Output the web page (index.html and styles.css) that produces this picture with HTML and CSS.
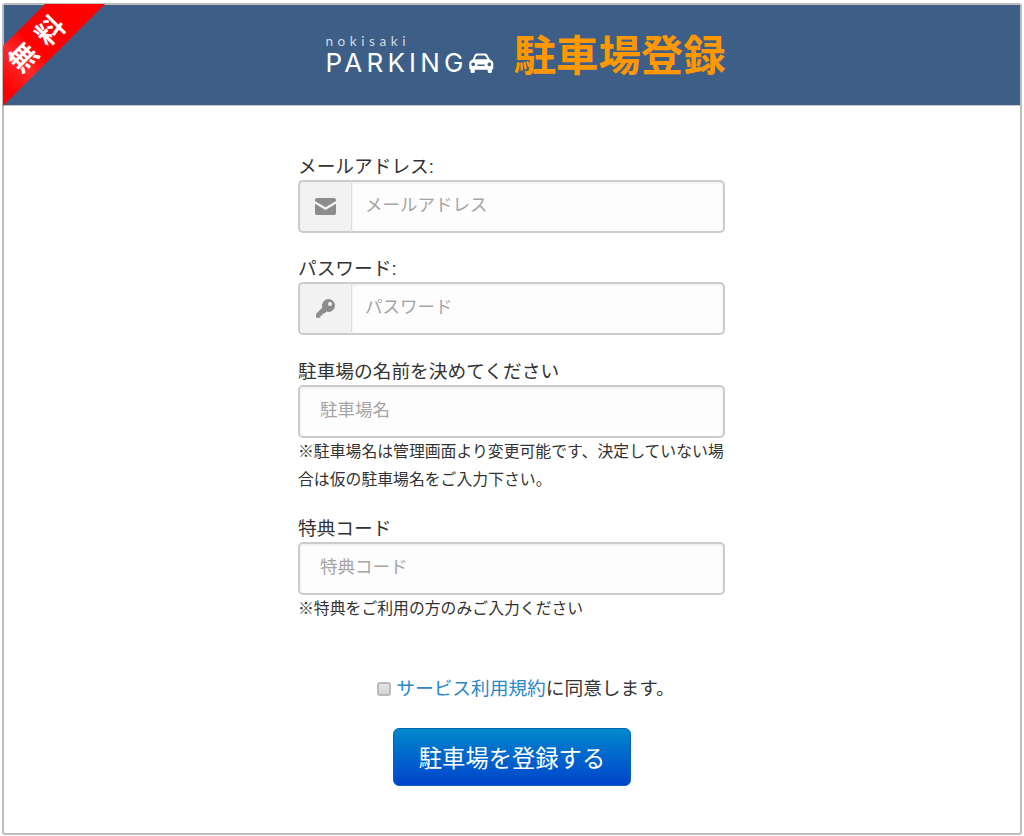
FILE: index.html
```html
<!DOCTYPE html>
<html lang="ja">
<head>
    <meta charset="UTF-8">
    <meta name="viewport" content="width=device-width, initial-scale=1.0">
    <title>駐車場登録</title>
    <link rel="stylesheet" href="styles.css">
</head>
<body>
    <div class="panel">
        <header class="panel-header">
            <div class="ribbon">
                <svg class="ribbon-band" width="102" height="102" viewBox="0 0 102 102">
                    <defs>
                        <linearGradient id="ribbon-fill" x1="0" y1="1" x2="1" y2="0">
                            <stop offset="0.1" stop-color="#ff0000"/>
                            <stop offset="0.3" stop-color="#ff2a2a"/>
                            <stop offset="0.45" stop-color="#ff0000"/>
                        </linearGradient>
                    </defs>
                    <polygon points="42,0 102,0 0,102 0,42" fill="url(#ribbon-fill)"/>
                </svg>
                <span class="ribbon-text">無料</span>
            </div>
            <div class="logo">
                <div class="logo-small">nokisaki</div>
                <div class="logo-main">
                    <span>PARKING</span>
                    <svg class="logo-car" width="26" height="21" viewBox="0 0 25 20">
                        <path fill="#fff" fill-rule="evenodd" d="M6.5 1.5C7 .8 8 .4 9 .4h7c1 0 2 .4 2.500 1.100L21 6.200c1.900.5 3.300 1.800 3.300 3.800v4.300c0 .8-.5 1.400-1.300 1.500v1.900c0 .9-.6 1.500-1.500 1.500h-1c-.9 0-1.500-.6-1.500-1.500v-1.800H6.500v1.800c0 .9-.6 1.500-1.500 1.500H4c-.9 0-1.500-.6-1.500-1.500v-1.900c-.8-.1-1.300-.7-1.300-1.500V10c0-2 1.400-3.300 3.300-3.800zM8.200 2.700 6.300 6h12.400l-1.900-3.300c-.2-.3-.6-.5-1-.5H9.200c-.4 0-.8.200-1 .5zM5 9a1.800 1.800 0 1 0 0 3.600A1.800 1.800 0 0 0 5 9zm15.500 0a1.800 1.800 0 1 0 0 3.600 1.800 1.800 0 0 0 0-3.600zM9 11v1.500h7V11z"/>
                    </svg>
                </div>
            </div>
            <h1 class="page-title">駐車場登録</h1>
        </header>

        <form class="signup-form">
            <div class="field field-first">
                <label class="field-label">メールアドレス:</label>
                <div class="input-group">
                    <span class="input-addon">
                        <svg width="21" height="17" viewBox="0 0 21 16" preserveAspectRatio="none">
                            <path fill="#8c8c8c" d="M2 0h17c1.100 0 2 .9 2 2v.8l-10.500 6L0 2.800V2C0 .9.900 0 2 0zM0 5.300l10.500 6 10.500-6V14c0 1.100-.9 2-2 2H2c-1.100 0-2-.9-2-2z"/>
                        </svg>
                    </span>
                    <input class="input input-joined" type="text" placeholder="メールアドレス">
                </div>
            </div>

            <div class="field">
                <label class="field-label">パスワード:</label>
                <div class="input-group">
                    <span class="input-addon">
                        <svg width="19" height="19" viewBox="0 0 19 19">
                            <path fill="#8c8c8c" fill-rule="evenodd" d="M12.500 0A6.500 6.500 0 0 1 19 6.500 6.500 6.500 0 0 1 12.500 13c-.8 0-1.500-.1-2.200-.4L8.500 14.500H6.500V16.500H4.500V18.500L1 19 0 18v-3l6.400-6.400A6.500 6.500 0 0 1 12.500 0zM14 3a2 2 0 1 0 0 4 2 2 0 0 0 0-4z"/>
                        </svg>
                    </span>
                    <input class="input input-joined" type="text" placeholder="パスワード">
                </div>
            </div>

            <div class="field field-tight">
                <label class="field-label">駐車場の名前を決めてください</label>
                <input class="input" type="text" placeholder="駐車場名">
                <p class="field-note">※駐車場名は管理画面より変更可能です、決定していない場合は仮の駐車場名をご入力下さい。</p>
            </div>

            <div class="field">
                <label class="field-label">特典コード</label>
                <input class="input" type="text" placeholder="特典コード">
                <p class="field-note">※特典をご利用の方のみご入力ください</p>
            </div>

            <div class="agree">
                <input class="agree-check" type="checkbox">
                <span><a href="#">サービス利用規約</a>に同意します。</span>
            </div>

            <div class="actions">
                <button class="submit" type="button">駐車場を登録する</button>
            </div>
        </form>
    </div>
</body>
</html>
```

FILE: styles.css
```css
* {
    box-sizing: border-box;
}
body {
    margin: 0;
    padding: 3px 2px 0;
    background-color: #fff;
    color: #333;
    font-family: "Liberation Sans", "Noto Sans CJK JP", sans-serif;
}
.panel {
    height: 832px;
    border: 2px solid #bdbdbd;
    border-radius: 3px;
    background-color: #fff;
}
.panel-header {
    position: relative;
    display: flex;
    align-items: center;
    justify-content: center;
    gap: 20px;
    height: 101px;
    padding-left: 27px;
    background-color: #3c5e87;
    border-bottom: 1px solid #c8c8c8;
}
.ribbon {
    position: absolute;
    left: -1px;
    top: -1px;
}
.ribbon-band {
    display: block;
}
.ribbon-text {
    position: absolute;
    left: -2px;
    top: 21px;
    width: 76px;
    color: #fff;
    font-size: 28px;
    font-weight: bold;
    font-family: "Noto Sans CJK JP", sans-serif;
    letter-spacing: 10px;
    line-height: 28px;
    text-align: center;
    transform: rotate(-45deg);
}
.logo {
    color: #fff;
    font-family: Inter, sans-serif;
}
.logo-small {
    color: #d5dbe3;
    font-size: 13.500px;
    font-family: Lato, sans-serif;
    letter-spacing: 4.600px;
    line-height: 15px;
    padding-top: 1px;
}
.logo-main {
    display: flex;
    align-items: center;
    font-size: 26px;
    letter-spacing: 4.200px;
    line-height: 28px;
}
.page-title {
    margin: 0 0 5px;
    color: #ff9800;
    font-family: "Noto Sans CJK JP", sans-serif;
    font-size: 42.400px;
    font-weight: bold;
    line-height: 50px;
}
.signup-form {
    width: 427px;
    margin-left: 294px;
    padding-top: 48px;
}
.field {
    margin-bottom: 24px;
}
.field-first {
    margin-bottom: 23px;
}
.field-tight {
    margin-bottom: 22px;
}
.field-label {
    display: block;
    font-size: 18.700px;
    line-height: 26px;
}
.input-group {
    display: flex;
}
.input-addon {
    display: flex;
    flex: none;
    align-items: center;
    justify-content: center;
    width: 54px;
    height: 53px;
    background-color: #f2f2f2;
    border: 2px solid #ccc;
    border-right: 1px solid #ddd;
    border-radius: 5px 0 0 5px;
}
.input {
    display: block;
    width: 100%;
    height: 53px;
    padding: 0 20px 2px;
    background-color: #fdfdfd;
    border: 2px solid #ccc;
    border-radius: 5px;
    box-shadow: inset 0 1px 3px rgba(0,0,0,0.08);
    font-family: inherit;
    font-size: 17.500px;
    color: #333;
}
.input::placeholder {
    color: #a5a5a5;
    opacity: 1;
}
.input-joined {
    flex: 1;
    width: auto;
    border-left: none;
    border-radius: 0 5px 5px 0;
    padding-left: 13px;
}
.field-note {
    margin: 0 -3px 0 0;
    font-size: 15.850px;
    line-height: 28px;
}
.agree {
    display: flex;
    align-items: center;
    justify-content: center;
    margin-top: 53px;
    padding-left: 29px;
    font-size: 18.700px;
    line-height: 26px;
}
.agree-check {
    appearance: none;
    width: 14px;
    height: 14px;
    margin: 0 5px 0 0;
    background: linear-gradient(#e4e4e4, #d4d4d4);
    border: 2px solid #bbb;
    border-radius: 3px;
}
.agree a {
    color: #2a87c8;
    text-decoration: none;
}
.actions {
    display: flex;
    justify-content: center;
    margin-top: 26px;
    padding-left: 1px;
}
.submit {
    width: 238px;
    height: 58px;
    background: linear-gradient(#0088cc, #0044cc);
    border: 1px solid #0a62b5;
    border-radius: 6px;
    color: #fff;
    font-family: inherit;
    font-size: 23.300px;
    cursor: pointer;
}
```
